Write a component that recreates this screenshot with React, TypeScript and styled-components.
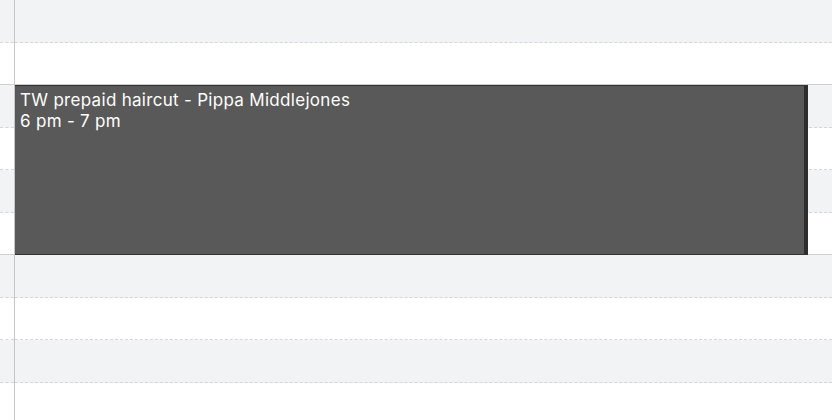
import styled, {createGlobalStyle} from "styled-components";

const GlobalStyle = createGlobalStyle`
    html, body {
        margin: 0;
        padding: 0;
        background: #ffffff;
        overflow: hidden;
    }
    body {
        font-family: Inter, "Noto Sans", "Liberation Sans", sans-serif;
    }
`;

const SLOT_HEIGHT = 42.5;
const slots = Array.from({length: 10}, (_, i) => i);

const App = () => {
    return (
        <>
            <GlobalStyle/>
            <Calendar>
                <Gutter>
                    { slots.map((i) => (
                        <Slot key={ i } $shaded={ i % 2 === 0 } $hourEnd={ i % 4 === 1 }/>
                    )) }
                </Gutter>
                <DayColumn>
                    { slots.map((i) => (
                        <Slot key={ i } $shaded={ i % 2 === 0 } $hourEnd={ i % 4 === 1 }/>
                    )) }
                    <Event style={ {top: SLOT_HEIGHT * 2, height: SLOT_HEIGHT * 4} }>
                        <EventTitle>TW prepaid haircut - Pippa Middlejones</EventTitle>
                        <EventTime>6 pm - 7 pm</EventTime>
                    </Event>
                </DayColumn>
            </Calendar>
        </>
    )
}

const Calendar = styled.div`
    display: grid;
    grid-template-columns: 15px 1fr;
    width: 832px;
    height: 420px;
    overflow: hidden;
`;

const Gutter = styled.div`
    display: flex;
    flex-direction: column;
    box-sizing: border-box;
    border-right: 1px solid #c6c6c6;
`;

const DayColumn = styled.div`
    position: relative;
    display: flex;
    flex-direction: column;
`;

const Slot = styled.div<{ $shaded: boolean, $hourEnd: boolean }>`
    flex: 0 0 ${ SLOT_HEIGHT }px;
    box-sizing: border-box;
    background: ${ (p) => p.$shaded ? '#f2f3f5' : '#ffffff' };
    border-bottom: 1px ${ (p) => p.$hourEnd ? 'solid #cfcfcf' : 'dashed #d6d6d6' };
`;

const Event = styled.div`
    position: absolute;
    left: 0;
    right: 24px;
    box-sizing: border-box;
    background: #595959;
    border-top: 1px solid #333333;
    border-bottom: 1px solid #333333;
    border-right: 4px solid #2e2e2e;
    padding: 4px 5px;
    color: #ffffff;
    font-size: 17px;
    letter-spacing: 0.3px;
    line-height: 21px;
`;

const EventTitle = styled.div`
    white-space: nowrap;
`;

const EventTime = styled.div`
`;

export default App;
